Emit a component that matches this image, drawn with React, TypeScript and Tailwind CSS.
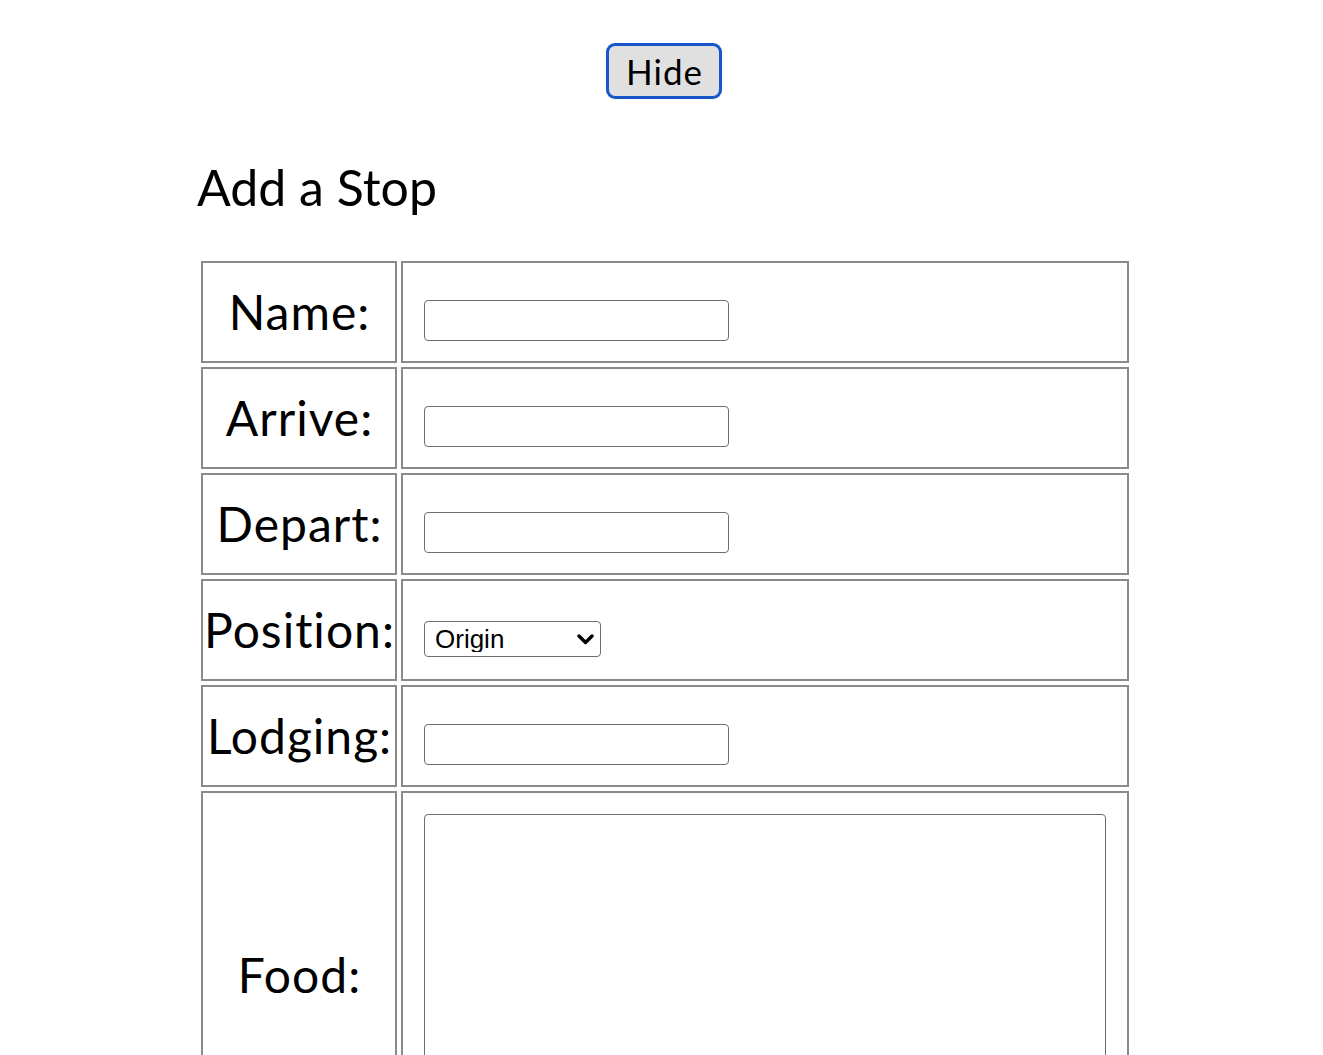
import React from 'react';

const rows = ['Name:', 'Arrive:', 'Depart:'];

const Label: React.FC<{ text: string }> = ({ text }) => (
  <div className="flex items-center justify-center border-2 border-[#8a8a8a] pl-[1px] text-[48px] leading-none tracking-[1px] whitespace-nowrap">
    {text}
  </div>
);

const TextInput: React.FC = () => (
  <input
    type="text"
    className="h-[41px] w-[305px] rounded-[4px] border border-[#6e6e6e] bg-white px-1 font-['Liberation_Sans',sans-serif] text-[22px] outline-none"
  />
);

export default function App() {
  return (
    <div className="min-h-screen bg-white font-['Lato',sans-serif] text-black">
      <div className="flex justify-center pl-[5px] pt-[43px]">
        <button className="h-[56px] w-[116px] rounded-[9px] border-[3px] border-[#1557c9] bg-[#e0e0e0] pl-[1px] text-[35px] leading-none tracking-[1px]">
          Hide
        </button>
      </div>

      <div className="pl-[197px] pt-[60px]">
        <h2 className="text-[50px] leading-[56px]">Add a Stop</h2>

        <div className="ml-[4px] mt-[46px] grid grid-cols-[196px_728px] gap-[4px]">
          {rows.map((r) => (
            <React.Fragment key={r}>
              <Label text={r} />
              <div className="h-[102px] border-2 border-[#8a8a8a] pl-[21px] pt-[37px]">
                <TextInput />
              </div>
            </React.Fragment>
          ))}

          <Label text="Position:" />
          <div className="h-[102px] border-2 border-[#8a8a8a] pl-[21px] pt-[40px]">
            <div className="relative w-[177px]">
              <select className="h-[36px] w-[177px] appearance-none rounded-[4px] border border-[#6e6e6e] bg-white pl-[10px] font-['Liberation_Sans',sans-serif] text-[26px] leading-none outline-none">
                <option>Origin</option>
                <option>Stop</option>
                <option>Destination</option>
              </select>
              <svg
                className="pointer-events-none absolute right-[7px] top-[13px]"
                width="17"
                height="11"
                viewBox="0 0 17 11"
                fill="none"
              >
                <path d="M2 2l6.5 6.5L15 2" stroke="black" strokeWidth="3.4" strokeLinecap="round" strokeLinejoin="round" />
              </svg>
            </div>
          </div>

          <Label text="Lodging:" />
          <div className="h-[102px] border-2 border-[#8a8a8a] pl-[21px] pt-[37px]">
            <TextInput />
          </div>

          <Label text="Food:" />
          <div className="border-2 border-[#8a8a8a] p-[21px]">
            <textarea className="block h-[322px] w-[682px] resize-none rounded-[4px] border border-[#6e6e6e] bg-white outline-none" />
          </div>
        </div>
      </div>
    </div>
  );
}
